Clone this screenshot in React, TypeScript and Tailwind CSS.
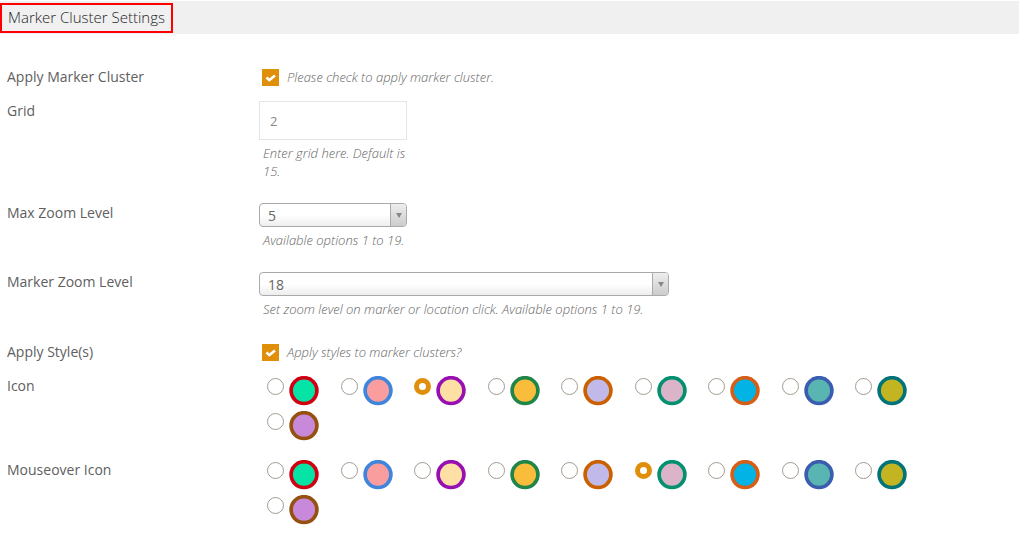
import { useState } from 'react';
import type { ReactNode } from 'react';

const icons = [
  { id: 'green', name: 'Green', fill: '#05e3a5', ring: '#d00012' },
  { id: 'salmon', name: 'Salmon', fill: '#f99d9e', ring: '#4085dc' },
  { id: 'cream', name: 'Cream', fill: '#fee0a5', ring: '#980fb2' },
  { id: 'amber', name: 'Amber', fill: '#fabd3b', ring: '#1f8549' },
  { id: 'lavender', name: 'Lavender', fill: '#c2b9eb', ring: '#ca6000' },
  { id: 'pink', name: 'Pink', fill: '#dcb4c9', ring: '#02906f' },
  { id: 'blue', name: 'Blue', fill: '#02b3e5', ring: '#d65e16' },
  { id: 'teal', name: 'Teal', fill: '#59b5b1', ring: '#3b5db0' },
  { id: 'olive', name: 'Olive', fill: '#c3b522', ring: '#027378' },
  { id: 'violet', name: 'Violet', fill: '#c889da', ring: '#965010' },
];

const zoomLevels = Array.from({ length: 19 }, (_, i) => String(i + 1));

const labelStyle = 'w-[252px] shrink-0 text-sm leading-5 text-[#606060]';
const hintStyle = 'text-[13px] leading-[18px] font-light italic text-[#666]';

function Row({ label, htmlFor, children }: { label: string; htmlFor: string; children: ReactNode }) {
  return (
    <div className="flex items-start">
      <label htmlFor={htmlFor} className={labelStyle}>
        {label}
      </label>
      <div className="min-w-0 flex-1">{children}</div>
    </div>
  );
}

function CheckField({ id, hint }: { id: string; hint: string }) {
  const [checked, setChecked] = useState(true);

  return (
    <div className="flex h-5 items-center gap-2 pl-[3px]">
      <span className="relative block size-[17px]">
        <input
          id={id}
          type="checkbox"
          checked={checked}
          onChange={(e) => setChecked(e.target.checked)}
          className="block size-[17px] appearance-none border border-[#b4b9be] bg-white checked:border-[#e08f0b] checked:bg-[#e08f0b]"
        />
        {checked && (
          <svg viewBox="0 0 17 17" className="pointer-events-none absolute inset-0" fill="none" stroke="#fff" strokeWidth="2.6">
            <path d="M4.4 8.4 7.4 11 13 6.6" />
          </svg>
        )}
      </span>
      <label htmlFor={id} className={hintStyle}>
        {hint}
      </label>
    </div>
  );
}

function ZoomSelect({ id, initial }: { id: string; initial: string }) {
  const [value, setValue] = useState(initial);

  return (
    <div className="relative h-6">
      <select
        id={id}
        value={value}
        onChange={(e) => setValue(e.target.value)}
        className="block h-6 w-full appearance-none rounded border border-[#aaa] bg-linear-to-b from-white from-50% to-[#eee] pt-[2px] pl-2 text-sm leading-5 text-[#666]"
      >
        {zoomLevels.map((level) => (
          <option key={level}>{level}</option>
        ))}
      </select>
      <span className="pointer-events-none absolute inset-y-px right-px flex w-4 items-center justify-center rounded-r-[3px] border-l border-[#aaa] bg-linear-to-b from-[#eee] to-[#ccc]">
        <svg width="6" height="6" viewBox="0 0 6 6" fill="#888">
          <path d="M0 1h6L3 6z" />
        </svg>
      </span>
    </div>
  );
}

function IconPicker({ name, label, initial }: { name: string; label: string; initial: string }) {
  const [selected, setSelected] = useState(initial);

  return (
    <div className="flex items-start">
      <div id={name} className={labelStyle}>
        {label}
      </div>
      <div
        role="radiogroup"
        aria-labelledby={name}
        className="grid max-w-[670px] min-w-0 flex-1 grid-cols-9 gap-y-[5px] pl-2"
      >
        {icons.map((icon) => (
          <label key={icon.id} className="flex items-start gap-[5px]">
            <input
              type="radio"
              name={name}
              aria-label={icon.name}
              checked={selected === icon.id}
              onChange={() => setSelected(icon.id)}
              className="mt-[2px] size-[17px] shrink-0 appearance-none rounded-full border border-[#a39b8f] bg-white checked:border-[5px] checked:border-[#e08f0b]"
            />
            <svg viewBox="0 0 30 30" className="size-[30px] shrink-0">
              <circle cx="15" cy="14.6" r="12.9" fill={icon.fill} stroke={icon.ring} strokeWidth="3.7" />
            </svg>
          </label>
        ))}
      </div>
    </div>
  );
}

export default function App() {
  const [grid, setGrid] = useState('2');

  return (
    <div className="min-h-screen bg-white pt-px font-['Open_Sans',sans-serif]">
      <div className="mr-[5px] bg-[#f0f0f0]">
        <h2 className="relative flex h-[33px] items-center pb-px pl-2 text-[15px] leading-5 font-light text-[#1d2327]">
          Marker Cluster Settings
          <span className="absolute top-[2px] left-0 h-[30px] w-[173px] border-2 border-[#ff0000]" />
        </h2>
      </div>

      <form className="flex flex-col gap-[14px] pt-[33px] pr-[5px] pl-[7px]" onSubmit={(e) => e.preventDefault()}>
        <Row label="Apply Marker Cluster" htmlFor="apply-cluster">
          <CheckField id="apply-cluster" hint="Please check to apply marker cluster." />
        </Row>

        <div className="flex flex-col gap-[23px] pb-[10px]">
          <Row label="Grid" htmlFor="grid">
            <div className="max-w-[148px]">
              <input
                id="grid"
                type="text"
                value={grid}
                onChange={(e) => setGrid(e.target.value)}
                className="block h-[39px] w-full border border-[#e5e5e5] bg-white px-[10px] text-[13px] text-[#888]"
              />
              <p className={`${hintStyle} pt-1 pl-1`}>Enter grid here. Default is 15.</p>
            </div>
          </Row>

          <Row label="Max Zoom Level" htmlFor="max-zoom">
            <div className="max-w-[148px]">
              <ZoomSelect id="max-zoom" initial="5" />
            </div>
            <p className={`${hintStyle} pt-1 pl-1`}>Available options 1 to 19.</p>
          </Row>

          <Row label="Marker Zoom Level" htmlFor="marker-zoom">
            <div className="max-w-[410px]">
              <ZoomSelect id="marker-zoom" initial="18" />
            </div>
            <p className={`${hintStyle} pt-1 pl-1`}>
              Set zoom level on marker or location click. Available options 1 to 19.
            </p>
          </Row>
        </div>

        <Row label="Apply Style(s)" htmlFor="apply-styles">
          <CheckField id="apply-styles" hint="Apply styles to marker clusters?" />
        </Row>

        <div className="flex flex-col gap-[19px]">
          <IconPicker name="icon" label="Icon" initial="cream" />
          <IconPicker name="mouseover-icon" label="Mouseover Icon" initial="pink" />
        </div>
      </form>
    </div>
  );
}
